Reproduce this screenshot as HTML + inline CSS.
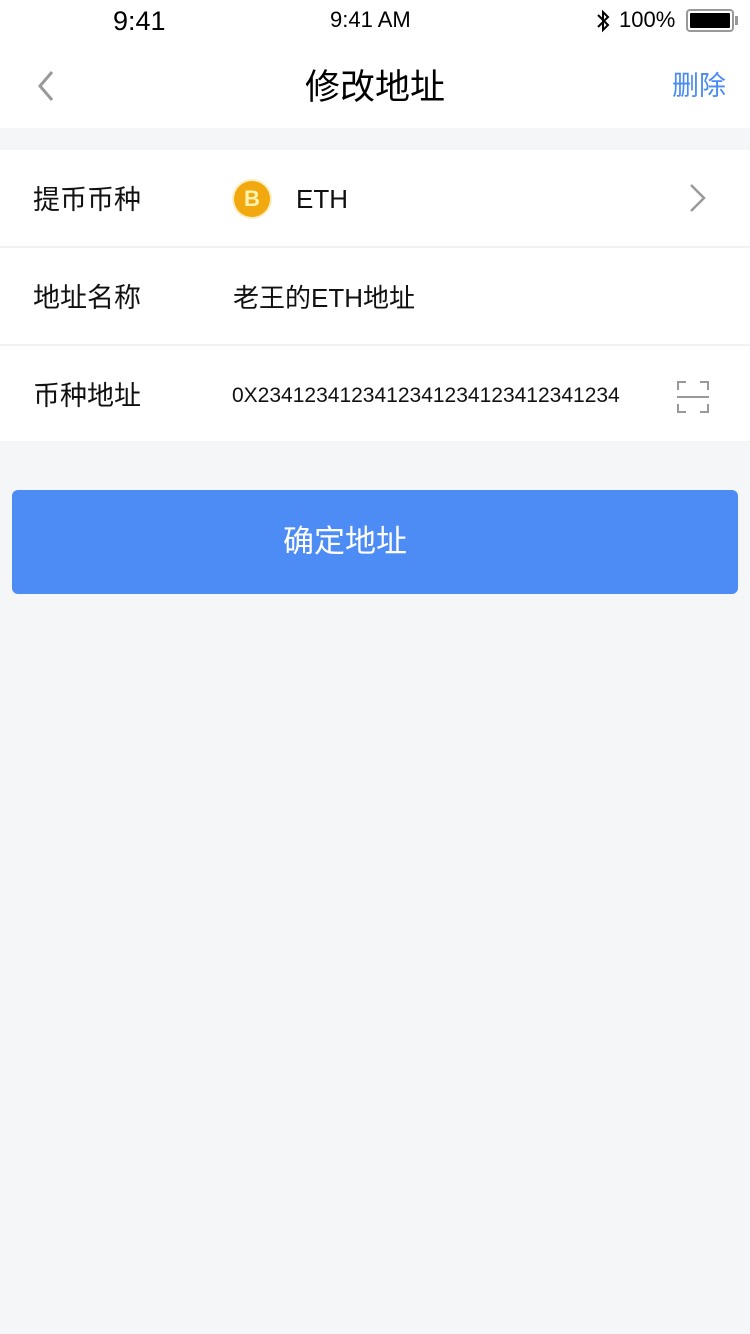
<!DOCTYPE html>
<html><head><meta charset="utf-8"><style>
*{margin:0;padding:0;box-sizing:border-box}
body{width:750px;height:1334px;background:#f5f6f8;font-family:"Liberation Sans","Noto Sans CJK SC",sans-serif;position:relative;overflow:hidden}
.a{position:absolute;white-space:nowrap;line-height:1}
</style></head><body>
<div class="a" style="left:0;top:0;width:750px;height:128px;background:#fff"></div>
<div class="a" style="left:113px;top:8px;font-size:27px;color:#000">9:41</div>
<div class="a" style="left:330px;top:9px;font-size:22px;color:#000">9:41 AM</div>
<svg class="a" style="left:595px;top:9px" width="16" height="24" viewBox="0 0 16 24"><path d="M3 6l10 10-5 5V3l5 5L3 18" fill="none" stroke="#000" stroke-width="2"/></svg>
<div class="a" style="left:619px;top:9px;font-size:22px;color:#000">100%</div>
<div class="a" style="left:686px;top:9px;width:48px;height:23px;border:2px solid #999;border-radius:4px;padding:2px"><div style="width:100%;height:100%;background:#000;border-radius:1px"></div></div>
<div class="a" style="left:735px;top:16px;width:3px;height:9px;background:#999"></div>
<svg class="a" style="left:34px;top:70px" width="22" height="32" viewBox="0 0 22 32"><path d="M18 2L6 16l12 14" fill="none" stroke="#999" stroke-width="3"/></svg>
<div class="a" style="left:305px;top:70px;font-size:35px;color:#000">修改地址</div>
<div class="a" style="left:672px;top:73px;font-size:27px;color:#4a8af4">删除</div>

<div class="a" style="left:0;top:150px;width:750px;height:291px;background:#fff"></div>
<div class="a" style="left:0;top:246px;width:750px;height:2px;background:#f2f2f2"></div>
<div class="a" style="left:0;top:344px;width:750px;height:2px;background:#f2f2f2"></div>
<div class="a" style="left:33px;top:187px;font-size:27px;color:#111">提币币种</div>
<div class="a" style="left:33px;top:285px;font-size:27px;color:#111">地址名称</div>
<div class="a" style="left:33px;top:383px;font-size:27px;color:#111">币种地址</div>
<div class="a" style="left:234px;top:181px;width:36px;height:36px;border-radius:50%;background:#f2a90f;box-shadow:0 0 0 2px #fbeec0;color:#fff3b0;font-weight:bold;font-size:22px;text-align:center;line-height:36px">B</div>
<div class="a" style="left:296px;top:186px;font-size:26px;color:#111">ETH</div>
<svg class="a" style="left:688px;top:183px" width="20" height="30" viewBox="0 0 20 30"><path d="M3 2l13 13L3 28" fill="none" stroke="#999" stroke-width="2.5"/></svg>
<div class="a" style="left:233px;top:285px;font-size:26px;color:#111">老王的ETH地址</div>
<div class="a" style="left:232px;top:385px;font-size:21px;color:#111">0X2341234123412341234123412341234</div>
<svg class="a" style="left:676px;top:380px" width="34" height="34" viewBox="0 0 34 34"><path d="M2 10V2h8M24 2h8v8M2 24v8h8M24 32h8v-8M1 17h32" fill="none" stroke="#999" stroke-width="2"/></svg>

<div class="a" style="left:12px;top:490px;width:726px;height:104px;background:#4d8bf5;border-radius:6px;color:#fff;font-size:31px;text-align:center;line-height:104px;padding-right:60px">确定地址</div>
</body></html>
